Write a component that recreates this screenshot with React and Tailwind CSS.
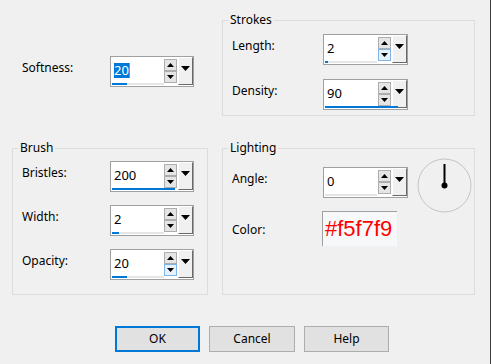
function Arrow({ up, big }) {
    if (big) {
        return (
            <svg width="9" height="5" viewBox="0 0 9 5">
                <path d="M0 0 L4.5 5 L9 0 Z" fill="#000" />
            </svg>
        );
    }
    return (
        <svg width="7" height="4" viewBox="0 0 7 4">
            <path d={up ? "M0 4 L3.5 0 L7 4 Z" : "M0 0 L3.5 4 L7 0 Z"} fill="#000" />
        </svg>
    );
}

function Spinner({ value, wide, bar, selected, hoverDown }) {
    return (
        <div className={`relative flex ${wide ? "w-[85px]" : "w-[84px]"} h-[31px] border border-[#a0a0a0] bg-white`}>
            <div className="flex-1 pl-[3px] pt-[6px] text-[13px] leading-[15px] text-black">
                {selected ? (
                    <span className="inline-flex items-center">
                        <span className="bg-[#0078d7] text-white">{value}</span>
                        <span className="w-[1px] h-[15px] bg-[#e8781e]" />
                    </span>
                ) : (
                    value
                )}
            </div>
            <div className="flex flex-col mt-[2px] w-[13px]">
                <div className="h-[12px] flex items-center justify-center border border-[#adadad] bg-[#e5e5e5]">
                    <Arrow up />
                </div>
                <div
                    className={`h-[12px] flex items-center justify-center border ${
                        hoverDown ? "border-[#7eb4ea] bg-[#e5f1fb]" : "border-[#adadad] bg-[#e5e5e5]"
                    }`}
                >
                    <Arrow />
                </div>
            </div>
            <div className="ml-[1px] w-[15px] h-[28px] flex justify-center pt-[8px] bg-[#f0f0f0] border-t border-l border-white border-r border-r-[#696969] border-b border-b-[#696969]">
                <Arrow big />
            </div>
            {/* value track */}
            <div className="absolute left-[1px] bottom-[1px] h-[2px] w-[52px] bg-[#e6e6e6]" />
            <div className={`absolute left-[1px] bottom-[1px] h-[2px] bg-[#0078d7] ${bar}`} />
        </div>
    );
}

function Row({ label, labelW, children }) {
    return (
        <div className="flex items-start">
            <div className={`${labelW} mt-[4px] text-[12px] leading-[16px] text-black`}>{label}</div>
            {children}
        </div>
    );
}

function Group({ title, className, children }) {
    return (
        <fieldset className={`border border-[#dcdcdc] ${className}`}>
            <legend className="ml-[5px] px-[2px] text-[12px] leading-[16px] text-black">{title}</legend>
            {children}
        </fieldset>
    );
}

export default function App() {
    return (
        <div className="w-[491px] h-[364px] bg-[#f0f0f0] border-r border-[#3c3c3c] pt-[12px] font-['Noto_Sans',sans-serif] overflow-hidden">
            {/* Top row */}
            <div className="flex items-start">
                <div className="w-[222px] pt-[44px] pl-[22px]">
                    <Row label="Softness:" labelW="w-[88px]">
                        <Spinner value="20" bar="w-[15px]" selected />
                    </Row>
                </div>
                <Group title="Strokes" className="w-[253px]">
                    <div className="flex flex-col gap-[14px] pl-[9px] pt-[6px] pb-[5px]">
                        <Row label="Length:" labelW="w-[91px]">
                            <Spinner value="2" wide bar="w-[3px]" hoverDown />
                        </Row>
                        <Row label="Density:" labelW="w-[91px]">
                            <Spinner value="90" wide bar="w-[73px]" />
                        </Row>
                    </div>
                </Group>
            </div>

            {/* Groups */}
            <div className="flex items-stretch ml-[12px] gap-[14px] mt-[24px]">
                <Group title="Brush" className="w-[196px]">
                    <div className="flex flex-col gap-[13px] pl-[9px] pt-[5px] pb-[14px]">
                        <Row label="Bristles:" labelW="w-[88px]">
                            <Spinner value="200" bar="w-[63px]" />
                        </Row>
                        <Row label="Width:" labelW="w-[88px]">
                            <Spinner value="2" bar="w-[7px]" />
                        </Row>
                        <Row label="Opacity:" labelW="w-[88px]">
                            <Spinner value="20" bar="w-[15px]" hoverDown />
                        </Row>
                    </div>
                </Group>
                <Group title="Lighting" className="w-[253px]">
                    <div className="flex flex-col pl-[9px] pt-[11px]">
                        <Row label="Angle:" labelW="w-[91px]">
                            <Spinner value="0" wide bar="w-[0px]" />
                            <div className="ml-[9px] h-[31px]">
                                <svg width="55" height="55" viewBox="0 0 55 55" className="-mt-[9px]">
                                    <circle cx="27.5" cy="27.5" r="26.5" fill="none" stroke="#c4c4c4" strokeWidth="1" />
                                    <line x1="27.5" y1="6" x2="27.5" y2="27.5" stroke="#000" strokeWidth="2" />
                                    <circle cx="27.5" cy="27.5" r="3" fill="#000" />
                                </svg>
                            </div>
                        </Row>
                        <div className="flex items-start mt-[13px]">
                            <div className="w-[90px] mt-[11px] text-[12px] leading-[16px] text-black">Color:</div>
                            <div className="w-[75px] h-[35px] border-t border-l border-[#a0a0a0] bg-[#f7f8fa] pl-[2px] pt-[4px] font-['Liberation_Sans',Arial,sans-serif] text-[22px] leading-[26px] text-[#ff0000]">
                                #f5f7f9
                            </div>
                        </div>
                    </div>
                </Group>
            </div>

            {/* Buttons */}
            <div className="flex gap-[9px] ml-[115px] mt-[31px]">
                <button className="w-[85px] h-[26px] border-2 border-[#0078d7] bg-[#e1e1e1] text-[12px] text-black">OK</button>
                <button className="w-[86px] h-[26px] border border-[#adadad] bg-[#e1e1e1] text-[12px] text-black">Cancel</button>
                <button className="w-[85px] h-[26px] border border-[#adadad] bg-[#e1e1e1] text-[12px] text-black">Help</button>
            </div>
        </div>
    );
}
